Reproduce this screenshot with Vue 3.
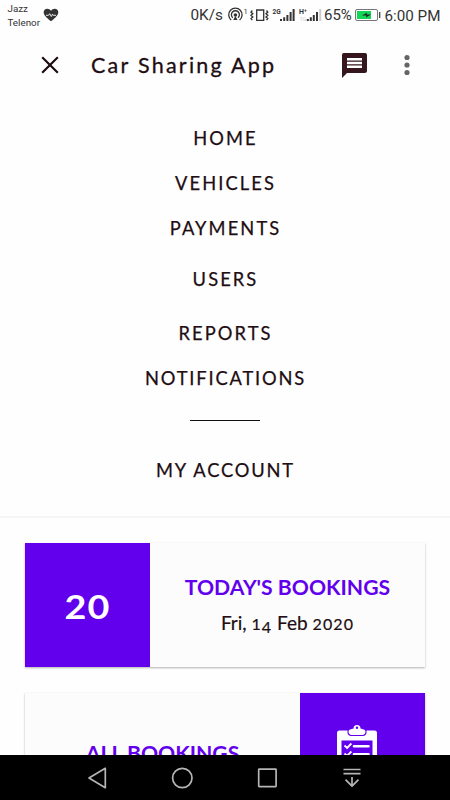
<template>
  <div class="screen">
    <div class="status">
      <div class="carrier">
        <span>Jazz</span>
        <span>Telenor</span>
      </div>
      <svg class="heart" width="16" height="14" viewBox="0 0 16 14">
        <path d="M8 13.3C3 9.2.7 7.1.7 4.2.7 2 2.3.7 4.2.7 5.8.7 7.2 1.5 8 2.8 8.8 1.5 10.2.7 11.8.7c1.9 0 3.5 1.3 3.5 3.5 0 2.9-2.3 5-7.300 9.100z" fill="#333" />
        <path d="M3 7.300h2.500l1.200-1.600 1.600 2.800 1.200-2.300.8 1.100H13" fill="none" stroke="#fff" stroke-width=".9" />
      </svg>
      <span class="speed">0K/s</span>
      <svg class="indicators" width="97" height="20" viewBox="0 0 97 20">
        <g fill="none" stroke="#333" stroke-width="1.300">
          <path d="M4.200 15a6.700 6.700 0 1 1 8.400 0" />
          <path d="M5.800 12.800a4 4 0 1 1 5.200 0" />
          <path d="M29.700 5h7v10.400h-7z" />
          <path d="M25.300 5.500L24 7.100l1.800 1.600-1.800 1.600 1.800 1.600-1.800 1.600 1.300 1.600M39.500 5.500l1.300 1.600L39 8.700l1.800 1.600-1.800 1.600 1.800 1.600-1.300 1.600" />
        </g>
        <circle cx="8.400" cy="10" r="1.800" fill="#333" />
        <path d="M8.400 11l2.200 4H6.200z" fill="#333" />
        <text x="16.500" y="8.500" font-size="7.500">1</text>
        <text x="45.500" y="8.500" font-size="6.500" font-weight="700">2G</text>
        <text x="72" y="9" font-size="7" font-weight="700">H⁺</text>
        <text x="72.500" y="16" font-size="5.500" class="pale">1G</text>
        <g fill="#333">
          <path d="M53 14h2v2h-2zM56.200 12.200h2V16h-2zM59.400 10h2v6h-2zM62.600 7h2v9h-2zM65.600 4h2v12h-2z" />
          <path d="M79.800 14h2v2h-2zM82.800 12.200h2V16h-2zM85.800 10h2v6h-2zM89 7h2v9h-2z" />
        </g>
        <path d="M92.200 4h2v12h-2z" fill="#ccc" />
      </svg>
      <span class="percent">65%</span>
      <svg class="battery" width="26" height="12" viewBox="0 0 26 12">
        <rect x=".5" y=".5" width="22" height="11" rx="1.500" fill="#fff" stroke="#777" />
        <rect x="2" y="2" width="14" height="8" fill="#12d655" />
        <path d="M7 6.500l5-2.800-.4 1.700H16l-5 3 .5-1.900z" fill="#222" />
        <path d="M24.700 3v6" stroke="#444" stroke-width="1.300" />
      </svg>
      <span class="clock">6:00 PM</span>
    </div>

    <header class="toolbar">
      <svg class="close" width="18" height="18" viewBox="0 0 18 18">
        <path d="M1.200 1.200l15.600 15.600M16.800 1.200L1.200 16.800" stroke="#1c0c10" stroke-width="2.200" />
      </svg>
      <h1>Car Sharing App</h1>
      <svg class="message" width="25" height="25" viewBox="0 0 25 25">
        <path d="M2.500 0h20A2.300 2.300 0 0 1 25 2.500v15a2.300 2.300 0 0 1-2.500 2.500H5l-5 5V2.500A2.300 2.300 0 0 1 2.500 0z" fill="#34161c" />
        <path d="M5 5h15v2.400H5zM5 8.800h15v2.400H5zM5 12.600h15V15H5z" fill="#fff" />
      </svg>
      <svg class="more" width="6" height="22" viewBox="0 0 6 22">
        <g fill="#656565">
          <circle cx="3" cy="3.500" r="2.600" />
          <circle cx="3" cy="11" r="2.600" />
          <circle cx="3" cy="18.500" r="2.600" />
        </g>
      </svg>
    </header>

    <nav class="menu">
      <a v-for="item in items" :key="item" :class="['menu__item', item.toLowerCase()]">{{ item }}</a>
      <hr />
      <a class="menu__item account">MY ACCOUNT</a>
    </nav>

    <main class="cards">
      <section class="card">
        <div class="tile"><span class="count">20</span></div>
        <div class="card__body">
          <h2>TODAY'S BOOKINGS</h2>
          <p>Fri, <span class="old">1<span class="drop">4</span></span> Feb <span class="old">2020</span></p>
        </div>
      </section>

      <section class="card">
        <div class="card__body all">
          <h2>ALL BOOKINGS</h2>
        </div>
        <div class="tile">
          <svg class="clipboard" width="40" height="56" viewBox="0 0 40 56">
            <rect y="6.500" width="40" height="49" rx="2.500" fill="#fff" />
            <rect x="4.500" y="16.500" width="31" height="34" fill="#6200ee" />
            <path d="M10.500 6v2.500c0 2 1.500 3.500 3.500 3.500h12c2 0 3.500-1.500 3.500-3.500V6z" fill="#6200ee" />
            <path d="M16.500 4.500a3.500 3.500 0 1 1 7 0c2 1 5 .5 5 3.300 0 2-1.300 3.200-3.200 3.200H14.700c-1.900 0-3.200-1.200-3.200-3.200 0-2.800 3-2.300 5-3.300z" fill="#fff" />
            <circle cx="20" cy="3.800" r="1.200" fill="#6200ee" />
            <path d="M7.500 21.500l2.600 2.400 4.300-4.400M7.500 29.500l2.600 2.400 4.300-4.400M7.500 37.500l2.600 2.400 4.300-4.400" fill="none" stroke="#fff" stroke-width="1.800" />
            <path d="M17 22.200h14.500M17 30.200h14.500M17 38.200h14.500" stroke="#fff" stroke-width="2.600" stroke-linecap="round" />
          </svg>
        </div>
      </section>
    </main>

    <footer class="softkeys">
      <svg width="20" height="22" viewBox="0 0 20 22">
        <path d="M18.300 1.300v19.400L2 11z" />
      </svg>
      <svg width="22" height="22" viewBox="0 0 22 22">
        <circle cx="11.300" cy="11" r="9.700" />
      </svg>
      <svg width="20" height="20" viewBox="0 0 20 20">
        <rect x="1.700" y="1.200" width="17.400" height="17.400" rx=".5" />
      </svg>
      <svg class="pull" width="18" height="20" viewBox="0 0 18 20">
        <path d="M.5 1.500h17M.5 5.700h17M9 9v9M2.500 11.700L9 18.200l6.500-6.500" />
      </svg>
    </footer>
  </div>
</template>

<script setup>
const items = ["HOME", "VEHICLES", "PAYMENTS", "USERS", "REPORTS", "NOTIFICATIONS"];
</script>

<style>
body {
  margin: 0;
  background: #fff;
}
</style>

<style scoped>
.screen {
  display: flex;
  flex-direction: column;
  width: 450px;
  height: 800px;
  overflow: hidden;
  background: #fefefe;
  color: #210d12;
  font-family: Lato, sans-serif;
}

svg {
  display: block;
  flex: none;
}

.status {
  display: flex;
  flex: none;
  height: 30px;
  font-family: Roboto, sans-serif;
  color: #333;
  white-space: nowrap;
}

.carrier {
  display: flex;
  flex-direction: column;
  width: 35px;
  padding: 2px 0 0 7.5px;
  font-size: 9.8px;
  line-height: 13.5px;
}

.heart {
  margin-top: 8px;
}

.speed {
  width: 36.5px;
  margin-left: 132px;
  font-size: 15.3px;
  line-height: 31px;
}

.indicators {
  margin-top: 5px;
}

.indicators text {
  fill: #333;
}

.indicators .pale {
  fill: #ccc;
}

.percent {
  width: 31px;
  font-size: 15px;
  line-height: 30px;
}

.battery {
  margin-top: 9px;
}

.clock {
  margin-left: 3.5px;
  font-size: 15.2px;
  line-height: 32px;
}

.toolbar {
  display: flex;
  flex: none;
  align-items: center;
  height: 70px;
  padding: 0 40px 0 41px;
}

h1 {
  width: 200px;
  margin: -1px 51px 0 32px;
  font-size: 21.5px;
  font-weight: 400;
  line-height: 30px;
  letter-spacing: 2.25px;
  white-space: nowrap;
  -webkit-text-stroke: 0.3px #210d12;
}

.more {
  margin-left: auto;
}

.menu {
  display: flex;
  flex: none;
  flex-direction: column;
  align-items: center;
  box-sizing: border-box;
  height: 418px;
  padding-top: 16px;
  border-bottom: 2px solid #f5f5f5;
}

.menu__item {
  height: 45px;
  padding-left: 1px;
  font-size: 18.3px;
  line-height: 45px;
  letter-spacing: 2.1px;
  white-space: nowrap;
  -webkit-text-stroke: 0.25px #210d12;
}

.users {
  height: 57px;
  line-height: 56px;
}

.reports {
  height: 49px;
  line-height: 50px;
}

.notifications {
  height: 44px;
  line-height: 43px;
  letter-spacing: 1.85px;
}

.account {
  letter-spacing: 1.85px;
}

hr {
  flex: none;
  width: 70px;
  height: 1px;
  margin: 19px 0 27px;
  border: 0;
  background: #111;
}

.cards {
  flex: 1;
  min-height: 0;
  padding: 25px 25px 0;
  overflow: hidden;
}

.card {
  display: flex;
  height: 124px;
  margin-bottom: 26px;
  background: #fcfcfc;
  box-shadow: 0 1px 2px rgba(0, 0, 0, 0.3);
}

.tile {
  display: flex;
  flex: none;
  justify-content: center;
  width: 125px;
  background: #6200ee;
}

.clipboard {
  margin: 31px 0 0 -11px;
}

.count {
  color: #fff;
  font-size: 32px;
  font-weight: 700;
  line-height: 127px;
  letter-spacing: 1px;
  transform: scaleX(1.18);
}

.card__body {
  flex: 1;
  padding-top: 30px;
  text-align: center;
}

.all {
  padding-top: 46px;
}

h2 {
  margin: 0;
  color: #6200ee;
  font-size: 21.2px;
  font-weight: 700;
  line-height: 28px;
  white-space: nowrap;
}

p {
  margin: 9px 0 0;
  font-size: 19px;
  line-height: 26px;
  white-space: nowrap;
  -webkit-text-stroke: 0.2px #210d12;
}

.old {
  font-size: 16px;
  letter-spacing: 1.1px;
}

.drop {
  position: relative;
  top: 3px;
}

.softkeys {
  display: flex;
  flex: none;
  align-items: center;
  gap: 64px;
  height: 45px;
  padding-left: 87px;
  background: #000;
}

.softkeys svg {
  fill: none;
  stroke: #b5b5b5;
  stroke-width: 1.7;
  stroke-linejoin: round;
}

.softkeys .pull {
  margin-left: 2px;
}
</style>
